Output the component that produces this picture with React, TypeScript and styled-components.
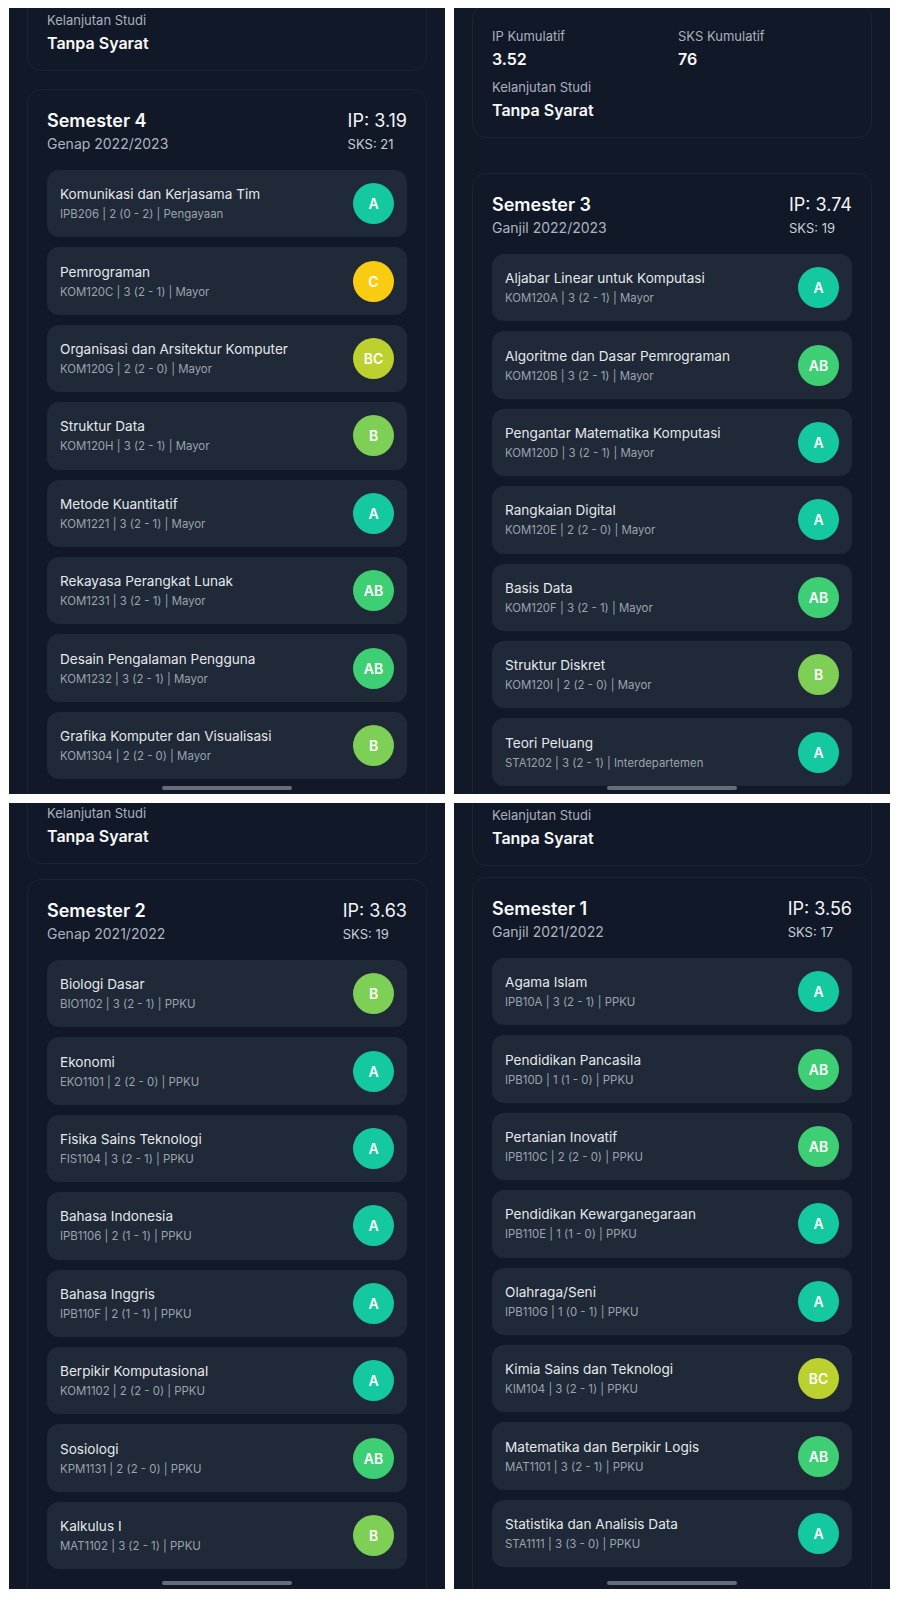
import React from 'react';
import styled, { createGlobalStyle } from 'styled-components';

const GlobalStyle = createGlobalStyle`
  html, body {
    margin: 0;
    padding: 0;
    background: #ffffff;
  }
  body {
    font-family: Inter, "Noto Sans", sans-serif;
    -webkit-font-smoothing: antialiased;
  }
  * {
    box-sizing: border-box;
  }
`;

type Grade = 'A' | 'AB' | 'B' | 'BC' | 'C';

const gradeColors: Record<Grade, string> = {
  A: '#14c99f',
  AB: '#3ecf74',
  B: '#7dcf55',
  BC: '#bcd12e',
  C: '#f9cc12',
};

const Page = styled.div`
  display: grid;
  grid-template-columns: repeat(2, 436px);
  grid-auto-rows: 786px;
  gap: 9px;
  padding: 8px 9px 11px;
`;

const Screen = styled.section`
  position: relative;
  overflow: hidden;
  background: #111827;
`;

const Content = styled.div`
  display: flex;
  flex-direction: column;
  padding: 0 18px;
`;

const SummaryCard = styled.div<{ $offset: number; $padTop: number }>`
  margin-top: ${(p) => p.$offset}px;
  border: 1px solid #1c2431;
  border-radius: 14px;
  padding: ${(p) => p.$padTop}px 19px 15px;
  display: grid;
  grid-template-columns: 186px 1fr;
  row-gap: 6px;
`;

const Field = styled.div<{ $wide?: boolean }>`
  grid-column: ${(p) => (p.$wide ? '1 / -1' : 'auto')};
`;

const FieldLabel = styled.div`
  font-size: 13px;
  line-height: 20px;
  color: #aab1bc;
  margin-bottom: 1px;
`;

const FieldValue = styled.div`
  font-size: 16px;
  line-height: 24px;
  font-weight: 600;
  color: #f9fafb;
`;

const SemesterCard = styled.div<{ $gap: number }>`
  margin-top: ${(p) => p.$gap}px;
  border: 1px solid #1c2431;
  border-radius: 14px;
  padding: 18px 19px 40px;
`;

const SemesterHeader = styled.div`
  display: flex;
  justify-content: space-between;
  margin-bottom: 16px;
`;

const SemesterTitle = styled.div`
  font-size: 18px;
  line-height: 26px;
  font-weight: 600;
  color: #f9fafb;
`;

const SemesterSub = styled.div`
  font-size: 14px;
  line-height: 20px;
  color: #aeb4bf;
`;

const ScoreIP = styled.div`
  font-size: 18px;
  line-height: 26px;
  color: #f3f4f6;
`;

const ScoreSKS = styled.div`
  font-size: 13px;
  line-height: 20px;
  color: #c9ced6;
`;

const CourseList = styled.div`
  display: flex;
  flex-direction: column;
  gap: 10px;
`;

const CourseItem = styled.div`
  height: 67.4px;
  padding: 0 13px;
  display: flex;
  align-items: center;
  justify-content: space-between;
  background: #1f2937;
  border-radius: 12px;
`;

const CourseName = styled.div`
  font-size: 13.6px;
  line-height: 20px;
  color: #e5e7eb;
`;

const CourseMeta = styled.div`
  font-size: 11.4px;
  line-height: 18px;
  margin-top: 1px;
  color: #9ca3af;
`;

const GradeBadge = styled.div<{ $grade: Grade }>`
  width: 41px;
  height: 41px;
  flex: none;
  border-radius: 50%;
  background: ${(p) => gradeColors[p.$grade]};
  color: #ffffff;
  font-size: 14px;
  font-weight: 600;
  display: flex;
  align-items: center;
  justify-content: center;
`;

const HomeBar = styled.div`
  position: absolute;
  left: 50%;
  bottom: 4px;
  width: 130px;
  height: 4.5px;
  margin-left: -65px;
  border-radius: 3px;
  background: #666d7a;
`;

type Course = [string, string, Grade];

interface Semester {
  title: string;
  period: string;
  ip: string;
  sks: string;
  courses: Course[];
}

interface ScreenData {
  semester: Semester;
  full: boolean;
  offset: number;
  padTop: number;
  gap: number;
}

const screens: ScreenData[] = [
  {
    full: false,
    offset: -15,
    padTop: 16,
    gap: 18,
    semester: {
      title: 'Semester 4',
      period: 'Genap 2022/2023',
      ip: '3.19',
      sks: '21',
      courses: [
        ['Komunikasi dan Kerjasama Tim', 'IPB206 | 2 (0 - 2) | Pengayaan', 'A'],
        ['Pemrograman', 'KOM120C | 3 (2 - 1) | Mayor', 'C'],
        ['Organisasi dan Arsitektur Komputer', 'KOM120G | 2 (2 - 0) | Mayor', 'BC'],
        ['Struktur Data', 'KOM120H | 3 (2 - 1) | Mayor', 'B'],
        ['Metode Kuantitatif', 'KOM1221 | 3 (2 - 1) | Mayor', 'A'],
        ['Rekayasa Perangkat Lunak', 'KOM1231 | 3 (2 - 1) | Mayor', 'AB'],
        ['Desain Pengalaman Pengguna', 'KOM1232 | 3 (2 - 1) | Mayor', 'AB'],
        ['Grafika Komputer dan Visualisasi', 'KOM1304 | 2 (2 - 0) | Mayor', 'B'],
      ],
    },
  },
  {
    full: true,
    offset: -4,
    padTop: 21,
    gap: 35,
    semester: {
      title: 'Semester 3',
      period: 'Ganjil 2022/2023',
      ip: '3.74',
      sks: '19',
      courses: [
        ['Aljabar Linear untuk Komputasi', 'KOM120A | 3 (2 - 1) | Mayor', 'A'],
        ['Algoritme dan Dasar Pemrograman', 'KOM120B | 3 (2 - 1) | Mayor', 'AB'],
        ['Pengantar Matematika Komputasi', 'KOM120D | 3 (2 - 1) | Mayor', 'A'],
        ['Rangkaian Digital', 'KOM120E | 2 (2 - 0) | Mayor', 'A'],
        ['Basis Data', 'KOM120F | 3 (2 - 1) | Mayor', 'AB'],
        ['Struktur Diskret', 'KOM120I | 2 (2 - 0) | Mayor', 'B'],
        ['Teori Peluang', 'STA1202 | 3 (2 - 1) | Interdepartemen', 'A'],
      ],
    },
  },
  {
    full: false,
    offset: -17,
    padTop: 16,
    gap: 15,
    semester: {
      title: 'Semester 2',
      period: 'Genap 2021/2022',
      ip: '3.63',
      sks: '19',
      courses: [
        ['Biologi Dasar', 'BIO1102 | 3 (2 - 1) | PPKU', 'B'],
        ['Ekonomi', 'EKO1101 | 2 (2 - 0) | PPKU', 'A'],
        ['Fisika Sains Teknologi', 'FIS1104 | 3 (2 - 1) | PPKU', 'A'],
        ['Bahasa Indonesia', 'IPB1106 | 2 (1 - 1) | PPKU', 'A'],
        ['Bahasa Inggris', 'IPB110F | 2 (1 - 1) | PPKU', 'A'],
        ['Berpikir Komputasional', 'KOM1102 | 2 (2 - 0) | PPKU', 'A'],
        ['Sosiologi', 'KPM1131 | 2 (2 - 0) | PPKU', 'AB'],
        ['Kalkulus I', 'MAT1102 | 3 (2 - 1) | PPKU', 'B'],
      ],
    },
  },
  {
    full: false,
    offset: -15,
    padTop: 16,
    gap: 11,
    semester: {
      title: 'Semester 1',
      period: 'Ganjil 2021/2022',
      ip: '3.56',
      sks: '17',
      courses: [
        ['Agama Islam', 'IPB10A | 3 (2 - 1) | PPKU', 'A'],
        ['Pendidikan Pancasila', 'IPB10D | 1 (1 - 0) | PPKU', 'AB'],
        ['Pertanian Inovatif', 'IPB110C | 2 (2 - 0) | PPKU', 'AB'],
        ['Pendidikan Kewarganegaraan', 'IPB110E | 1 (1 - 0) | PPKU', 'A'],
        ['Olahraga/Seni', 'IPB110G | 1 (0 - 1) | PPKU', 'A'],
        ['Kimia Sains dan Teknologi', 'KIM104 | 3 (2 - 1) | PPKU', 'BC'],
        ['Matematika dan Berpikir Logis', 'MAT1101 | 3 (2 - 1) | PPKU', 'AB'],
        ['Statistika dan Analisis Data', 'STA1111 | 3 (3 - 0) | PPKU', 'A'],
      ],
    },
  },
];

const PhoneScreen = ({ data }: { data: ScreenData }) => {
  const s = data.semester;
  return (
    <Screen>
      <Content>
        <SummaryCard $offset={data.offset} $padTop={data.padTop}>
          {data.full && (
            <>
              <Field>
                <FieldLabel>IP Kumulatif</FieldLabel>
                <FieldValue>3.52</FieldValue>
              </Field>
              <Field>
                <FieldLabel>SKS Kumulatif</FieldLabel>
                <FieldValue>76</FieldValue>
              </Field>
            </>
          )}
          <Field $wide>
            <FieldLabel>Kelanjutan Studi</FieldLabel>
            <FieldValue>Tanpa Syarat</FieldValue>
          </Field>
        </SummaryCard>

        <SemesterCard $gap={data.gap}>
          <SemesterHeader>
            <div>
              <SemesterTitle>{s.title}</SemesterTitle>
              <SemesterSub>{s.period}</SemesterSub>
            </div>
            <div>
              <ScoreIP>IP: {s.ip}</ScoreIP>
              <ScoreSKS>SKS: {s.sks}</ScoreSKS>
            </div>
          </SemesterHeader>
          <CourseList>
            {s.courses.map(([name, meta, grade]) => (
              <CourseItem key={name}>
                <div>
                  <CourseName>{name}</CourseName>
                  <CourseMeta>{meta}</CourseMeta>
                </div>
                <GradeBadge $grade={grade}>{grade}</GradeBadge>
              </CourseItem>
            ))}
          </CourseList>
        </SemesterCard>
      </Content>
      <HomeBar />
    </Screen>
  );
};

const App = () => {
  return (
    <>
      <GlobalStyle />
      <Page>
        {screens.map((d) => (
          <PhoneScreen key={d.semester.title} data={d} />
        ))}
      </Page>
    </>
  );
};

export default App;
